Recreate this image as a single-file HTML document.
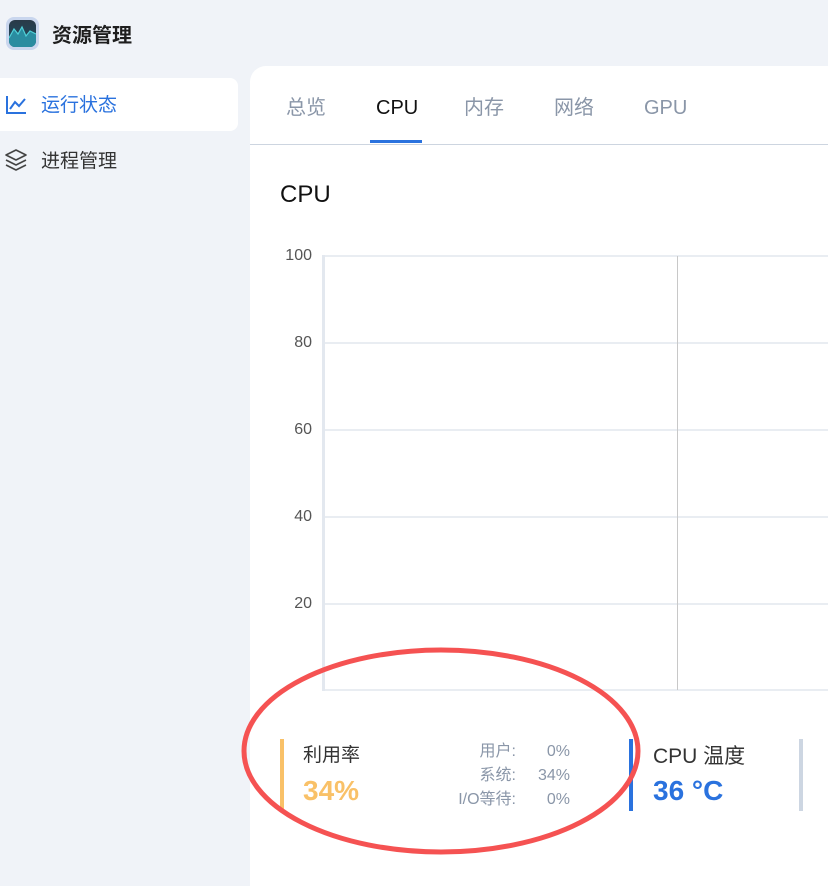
<!DOCTYPE html>
<html><head><meta charset="utf-8"><style>
*{margin:0;padding:0;box-sizing:border-box}
body{width:828px;height:870px;overflow:hidden;background:#f0f3f8;font-family:"Liberation Sans","Noto Sans CJK SC",sans-serif;position:relative}
.abs{position:absolute}
.logo{left:6px;top:17px;width:33px;height:33px;border-radius:8px;background:#c9d6ee;padding:3px}
.logo div{width:27px;height:27px;border-radius:6px;background:linear-gradient(#2a3a48,#1d4e63);overflow:hidden}
.title{left:52px;top:23px;font-size:20px;line-height:26px;font-weight:bold;color:#1e1e1e}
.nav1{left:0;top:78px;width:238px;height:53px;background:#fff;border-radius:0 8px 8px 0}
.nt{font-size:19px;line-height:26px}
.main{left:250px;top:66px;width:600px;height:820px;background:#fff;border-top-left-radius:16px}
.tab{top:95px;font-size:20px;line-height:26px;color:#8a96a8}
.grid{left:323px;height:2px;width:505px;background:#e9edf2}
.yl{font-size:16px;line-height:18px;color:#555;width:40px;text-align:right;left:272px}
.sm{font-size:16px;color:#8a96a8;text-align:right}
</style></head><body>
<div class="abs logo"><div><svg width="27" height="27"><path d="M0 18 L5 9 L9 14 L13 7 L17 16 L21 11 L27 14 L27 27 L0 27Z" fill="#2a8ca0"/><path d="M0 18 L5 9 L9 14 L13 7 L17 16 L21 11 L27 14" stroke="#4fd0d8" stroke-width="1.2" fill="none"/></svg></div></div>
<div class="abs title">资源管理</div>
<div class="abs nav1"></div>
<svg class="abs" style="left:6px;top:95px" width="22" height="20"><path d="M1 1 V18 H20 M4 14 L9 7 L13 11 L19 4" stroke="#2a72de" stroke-width="2" fill="none"/></svg>
<div class="abs nt" style="left:41px;top:93px;color:#2a72de">运行状态</div>
<svg class="abs" style="left:4px;top:148px" width="24" height="24"><g stroke="#444" stroke-width="1.6" fill="none" stroke-linejoin="round"><path d="M12 2 L22 7 L12 12 L2 7Z"/><path d="M2 12 L12 17 L22 12"/><path d="M2 17 L12 22 L22 17"/></g></svg>
<div class="abs nt" style="left:41px;top:149px;color:#333">进程管理</div>
<div class="abs main"></div>
<div class="abs tab" style="left:286px">总览</div>
<div class="abs tab" style="left:376px;color:#111">CPU</div>
<div class="abs tab" style="left:464px">内存</div>
<div class="abs tab" style="left:554px">网络</div>
<div class="abs tab" style="left:644px">GPU</div>
<div class="abs" style="left:370px;top:140px;width:52px;height:3px;background:#2a72de"></div>
<div class="abs" style="left:250px;top:144px;width:578px;height:1px;background:#cdd5e0"></div>
<div class="abs" style="left:280px;top:181px;font-size:24px;line-height:28px;color:#111">CPU</div>
<div class="abs grid" style="top:255px"></div>
<div class="abs grid" style="top:342px"></div>
<div class="abs grid" style="top:429px"></div>
<div class="abs grid" style="top:516px"></div>
<div class="abs grid" style="top:603px"></div>
<div class="abs grid" style="top:689px"></div>
<div class="abs" style="left:322px;top:255px;width:3px;height:436px;background:#e3e8ef"></div>
<div class="abs" style="left:677px;top:256px;width:1px;height:434px;background:#c8c8c8"></div>
<div class="abs yl" style="top:247px">100</div>
<div class="abs yl" style="top:334px">80</div>
<div class="abs yl" style="top:421px">60</div>
<div class="abs yl" style="top:508px">40</div>
<div class="abs yl" style="top:595px">20</div>
<div class="abs" style="left:280px;top:739px;width:4px;height:70px;background:#f9c168"></div>
<div class="abs" style="left:303px;top:743px;font-size:19px;line-height:26px;color:#333">利用率</div>
<div class="abs" style="left:303px;top:775px;font-size:28px;line-height:32px;font-weight:bold;color:#f9c168">34%</div>
<div class="abs sm" style="left:420px;top:740px;width:96px;line-height:24px">用户:<br>系统:<br>I/O等待:</div>
<div class="abs sm" style="left:520px;top:740px;width:50px;line-height:24px">0%<br>34%<br>0%</div>
<div class="abs" style="left:629px;top:739px;width:4px;height:72px;background:#2a72de"></div>
<div class="abs" style="left:653px;top:743px;font-size:21px;line-height:28px;color:#333">CPU 温度</div>
<div class="abs" style="left:653px;top:775px;font-size:28px;line-height:32px;font-weight:bold;color:#2a72de">36 °C</div>
<div class="abs" style="left:799px;top:739px;width:4px;height:72px;background:#cdd6e2"></div>
<svg class="abs" style="left:0;top:0" width="828" height="870"><ellipse cx="441" cy="751" rx="197" ry="101" fill="none" stroke="#f55252" stroke-width="5"/></svg>
</body></html>
